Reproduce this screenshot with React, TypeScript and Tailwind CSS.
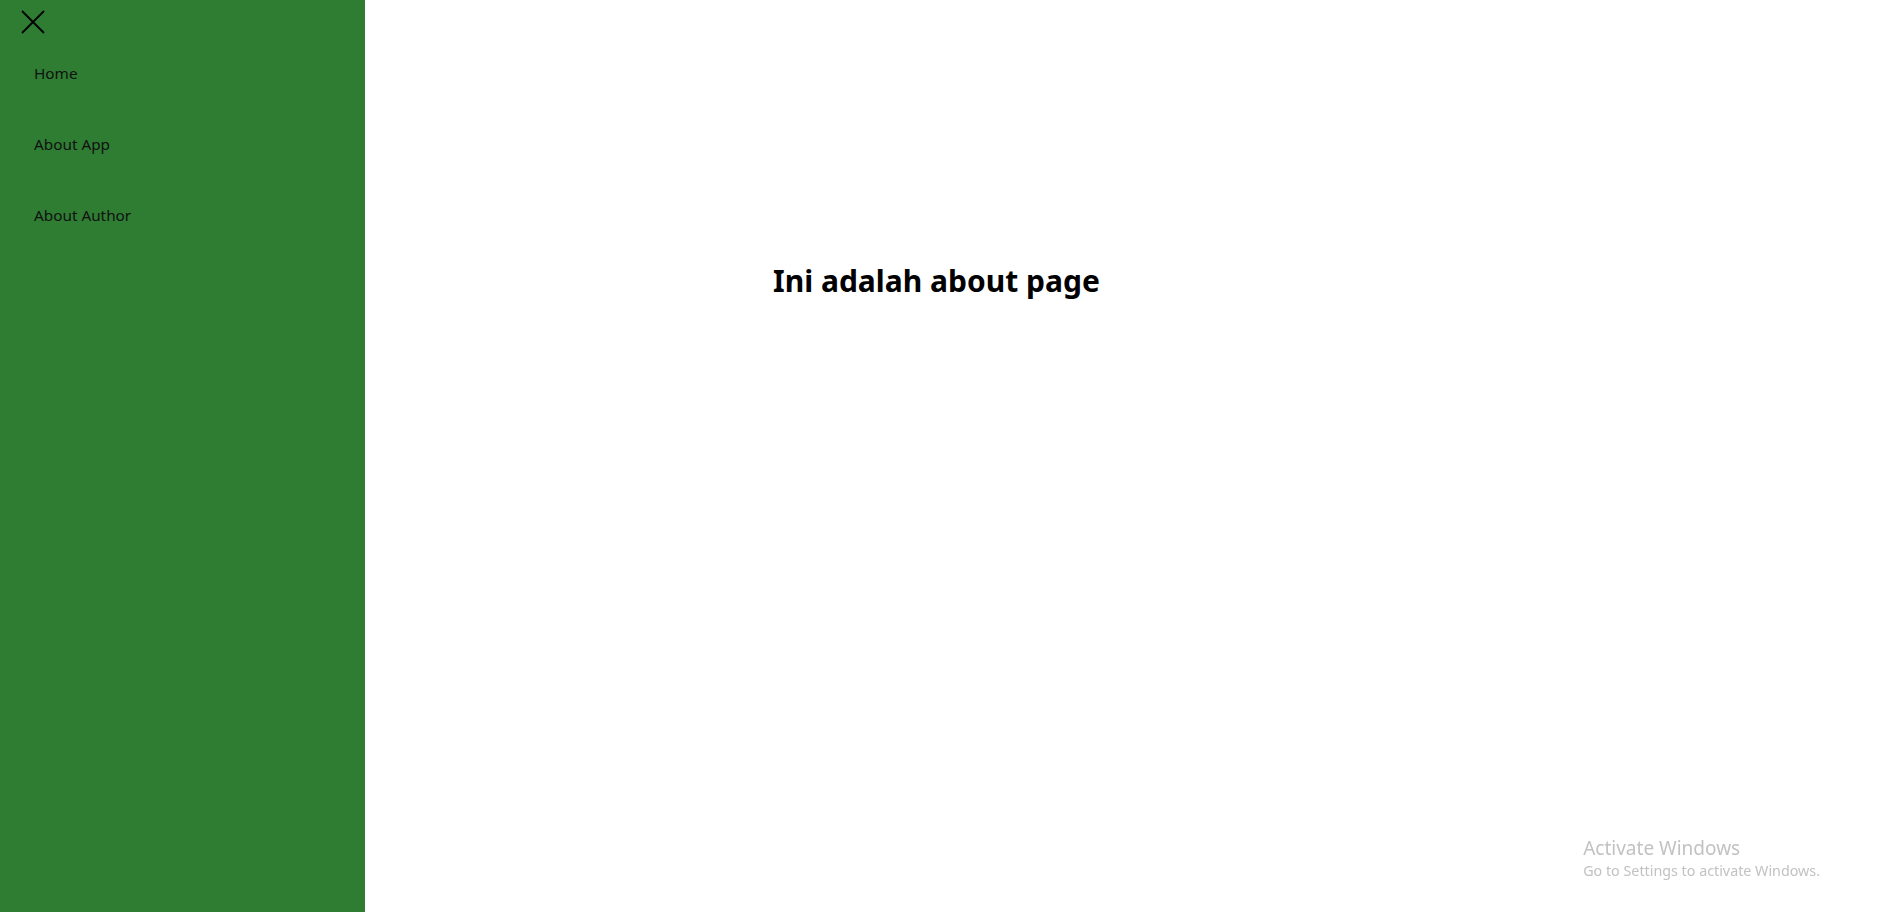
const links = ["Home", "About App", "About Author"];

export default function App() {
  return (
    <div className="flex h-screen w-full bg-white font-['Noto_Sans',sans-serif] text-black">
      {/* sidebar */}
      <aside className="h-full w-[365px] shrink-0 bg-[#2e7d32]">
        <div className="flex h-[38px] items-start pl-[21px] pt-[10px]">
          <svg width="24" height="24" viewBox="0 0 24 24" fill="none" stroke="#000" strokeWidth="1.8">
            <path d="M1 1L23 23M23 1L1 23" />
          </svg>
        </div>
        <nav className="flex flex-col">
          {links.map((l) => (
            <a key={l} className="flex h-[71px] items-center pl-[34px] text-[15.3px] text-[#111]">
              {l}
            </a>
          ))}
        </nav>
      </aside>

      {/* content */}
      <main className="flex-1 pl-[408px] pt-[260px]">
        <h1 className="text-[30px] font-bold leading-[42px]">Ini adalah about page</h1>
      </main>

      <div className="fixed right-[67px] bottom-[31px] text-[#c2c2c2]">
        <p className="text-[19px] leading-[25px]">Activate Windows</p>
        <p className="text-[14.3px] leading-[20px]">Go to Settings to activate Windows.</p>
      </div>
    </div>
  );
}
